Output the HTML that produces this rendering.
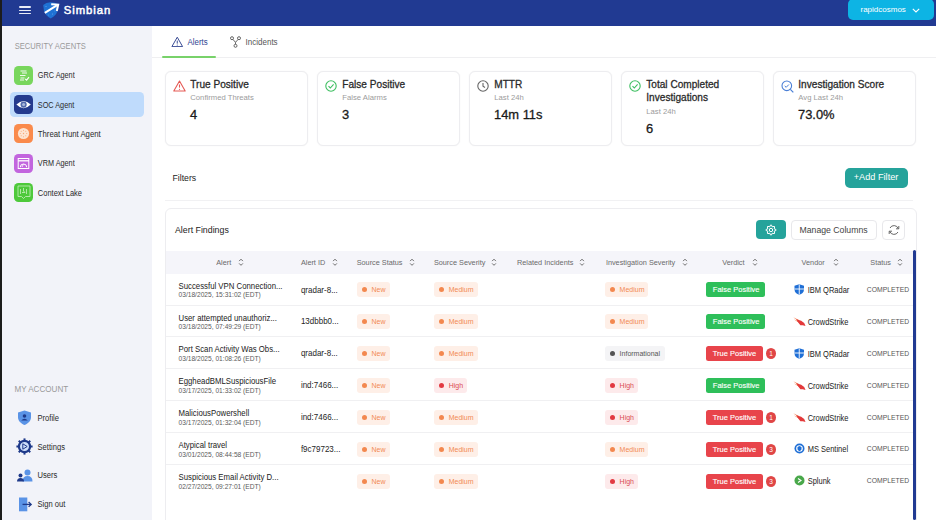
<!DOCTYPE html><html><head><meta charset="utf-8"><style>html,body{margin:0;padding:0}body{width:936px;height:520px;overflow:hidden;position:relative;background:#fff;font-family:'Liberation Sans',sans-serif;}div{box-sizing:border-box}</style></head><body>
<div style="position:absolute;left:0.00px;top:0.00px;width:936.00px;height:26.40px;background:#213a92"></div>
<div style="position:absolute;left:18.90px;top:6.20px;width:11.70px;height:1.40px;background:#e8edf8;border-radius:1px"></div>
<div style="position:absolute;left:18.90px;top:9.60px;width:11.70px;height:1.40px;background:#e8edf8;border-radius:1px"></div>
<div style="position:absolute;left:18.90px;top:12.90px;width:11.70px;height:1.40px;background:#e8edf8;border-radius:1px"></div>
<svg style="position:absolute;left:42.00px;top:1.00px" width="19" height="18" viewBox="0 0 19 18"><path d="M1.2 4 Q4 1.5 8.5 1.2 Q13 1.2 15.8 3 L15.6 9.5 Q14.5 14.5 8.8 17.4 Q3.5 15 2 10 Z" fill="#1f72d4"/><g fill="#6aa8f0"><circle cx="4" cy="5.5" r=".5"/><circle cx="10.5" cy="13" r=".5"/><circle cx="6.5" cy="14" r=".4"/><circle cx="12.8" cy="10" r=".4"/></g><path d="M2.8 11.8 L15.2 4.2" stroke="#fff" stroke-width="2.1" fill="none"/><path d="M9.2 3.2 L16.2 3.6 L14.8 10" stroke="#fff" stroke-width="2" fill="none" stroke-linejoin="miter"/></svg>
<div style="position:absolute;left:63.80px;top:4.52px;font-size:11.3px;line-height:11.3px;color:#fff;font-weight:400;white-space:nowrap;letter-spacing:0.95px;-webkit-text-stroke:0.5px #fff">Simbian</div>
<div style="position:absolute;left:847.80px;top:-1.00px;width:86.50px;height:20.80px;background:#0db4e4;border-radius:5px"></div>
<div style="position:absolute;left:860.50px;top:5.66px;font-size:8px;line-height:8px;color:#fff;font-weight:400;white-space:nowrap;">rapidcosmos</div>
<svg style="position:absolute;left:912.00px;top:8.00px" width="8" height="5" viewBox="0 0 8 5"><path d="M0.8 0.8 L4 4 L7.2 0.8" stroke="#fff" stroke-width="1.1" fill="none"/></svg>
<div style="position:absolute;left:0.00px;top:0.00px;width:2.30px;height:520.00px;background:#1c1c1c"></div>
<div style="position:absolute;left:2.30px;top:26.40px;width:149.70px;height:494.00px;background:#f2f3f9"></div>
<div style="position:absolute;left:14.70px;top:42.69px;font-size:7.6px;line-height:7.6px;color:#9a9a9a;font-weight:400;white-space:nowrap;transform:scaleY(1.15);transform-origin:0 80%">SECURITY AGENTS</div>
<div style="position:absolute;left:10.00px;top:92.00px;width:133.50px;height:24.60px;background:#bfdbfc;border-radius:4.5px"></div>
<div style="position:absolute;left:14.10px;top:65.50px;width:19.20px;height:19.20px;background:#79d65d;border-radius:4.5px"></div>
<div style="position:absolute;left:37.80px;top:72.34px;font-size:7.3px;line-height:7.3px;color:#2a2a2a;font-weight:400;white-space:nowrap;transform:scaleY(1.12);transform-origin:0 80%">GRC Agent</div>
<div style="position:absolute;left:14.10px;top:95.00px;width:19.20px;height:19.20px;background:#243a8e;border-radius:4.5px"></div>
<div style="position:absolute;left:37.80px;top:101.84px;font-size:7.3px;line-height:7.3px;color:#2a2a2a;font-weight:400;white-space:nowrap;transform:scaleY(1.12);transform-origin:0 80%">SOC Agent</div>
<div style="position:absolute;left:14.10px;top:124.20px;width:19.20px;height:19.20px;background:#fa8a4c;border-radius:4.5px"></div>
<div style="position:absolute;left:37.80px;top:130.66px;font-size:7.75px;line-height:7.75px;color:#2a2a2a;font-weight:400;white-space:nowrap;transform:scaleY(1.12);transform-origin:0 80%">Threat Hunt Agent</div>
<div style="position:absolute;left:14.10px;top:153.50px;width:19.20px;height:19.20px;background:#c265de;border-radius:4.5px"></div>
<div style="position:absolute;left:37.80px;top:160.34px;font-size:7.3px;line-height:7.3px;color:#2a2a2a;font-weight:400;white-space:nowrap;transform:scaleY(1.12);transform-origin:0 80%">VRM Agent</div>
<div style="position:absolute;left:14.10px;top:183.30px;width:19.20px;height:19.20px;background:#4ec93b;border-radius:4.5px"></div>
<div style="position:absolute;left:37.80px;top:189.97px;font-size:7.5px;line-height:7.5px;color:#2a2a2a;font-weight:400;white-space:nowrap;transform:scaleY(1.12);transform-origin:0 80%">Context Lake</div>
<svg style="position:absolute;left:14.20px;top:65.50px" width="19" height="19" viewBox="0 0 19 19"><path d="M6.5 5 H12.5 M8 7 H13 M6 9.5 H11.5 M6.5 12 H10.5 M6 14 H10" stroke="#fff" stroke-width="1.2" opacity=".9"/><path d="M11.2 12.8 L12.6 14.2 L15 11.2" stroke="#fff" stroke-width="1.1" fill="none"/></svg>
<svg style="position:absolute;left:14.20px;top:95.00px" width="19" height="19" viewBox="0 0 19 19"><path d="M2.4 9.6 Q9.6 2.2 16.8 9.6 Q9.6 17 2.4 9.6Z" fill="#fff"/><circle cx="9.6" cy="9.6" r="3.1" fill="#5268ab"/><circle cx="9.6" cy="9.6" r="1.5" fill="#a9b8dc"/></svg>
<svg style="position:absolute;left:14.20px;top:124.20px" width="19" height="19" viewBox="0 0 19 19"><circle cx="9.5" cy="9.5" r="5.6" fill="#fde4d2"/><g fill="#f9a775"><circle cx="12.70" cy="9.50" r=".55"/><circle cx="11.76" cy="11.76" r=".55"/><circle cx="9.50" cy="12.70" r=".55"/><circle cx="7.24" cy="11.76" r=".55"/><circle cx="6.30" cy="9.50" r=".55"/><circle cx="7.24" cy="7.24" r=".55"/><circle cx="9.50" cy="6.30" r=".55"/><circle cx="11.76" cy="7.24" r=".55"/><circle cx="9.5" cy="9.5" r=".7"/></g></svg>
<svg style="position:absolute;left:14.20px;top:153.50px" width="19" height="19" viewBox="0 0 19 19"><rect x="4.2" y="4.5" width="10.6" height="10" fill="none" stroke="#fff" stroke-width="1"/><path d="M4.2 6.8 H14.8" stroke="#fff" stroke-width="1.3"/><path d="M6.3 13.2 A3.2 3.2 0 0 1 12.7 13.2" stroke="#fff" stroke-width="1" fill="none"/><path d="M9.5 10 L8 13" stroke="#fff" stroke-width=".8"/></svg>
<svg style="position:absolute;left:14.20px;top:183.30px" width="19" height="19" viewBox="0 0 19 19"><path d="M4 3 H16 V13.5 H11.5 L9.5 15.5 L7.5 13.5 H4Z" fill="none" stroke="#c9f0c0" stroke-width=".8"/><path d="M6.5 6 V11 M9.5 5 V8 L11 9.5 M12.5 6 V11 M8 9.5 H11" stroke="#c9f0c0" stroke-width=".8" fill="none"/></svg>
<div style="position:absolute;left:14.40px;top:385.77px;font-size:8.1px;line-height:8.1px;color:#9a9a9a;font-weight:400;white-space:nowrap;transform:scaleY(1.1);transform-origin:0 80%">MY ACCOUNT</div>
<div style="position:absolute;left:37.50px;top:414.69px;font-size:7.6px;line-height:7.6px;color:#2a2a2a;font-weight:400;white-space:nowrap;transform:scaleY(1.12);transform-origin:0 80%">Profile</div>
<div style="position:absolute;left:37.50px;top:443.59px;font-size:7.6px;line-height:7.6px;color:#2a2a2a;font-weight:400;white-space:nowrap;transform:scaleY(1.12);transform-origin:0 80%">Settings</div>
<div style="position:absolute;left:37.50px;top:471.89px;font-size:7.6px;line-height:7.6px;color:#2a2a2a;font-weight:400;white-space:nowrap;transform:scaleY(1.12);transform-origin:0 80%">Users</div>
<div style="position:absolute;left:37.50px;top:500.69px;font-size:7.6px;line-height:7.6px;color:#2a2a2a;font-weight:400;white-space:nowrap;transform:scaleY(1.12);transform-origin:0 80%">Sign out</div>
<svg style="position:absolute;left:16.50px;top:410.00px" width="15" height="15" viewBox="0 0 15 15"><path d="M1 2.5 L7.5 0.5 L14 2.5 L14 7 C14 11 11 13.5 7.5 15 C4 13.5 1 11 1 7Z" fill="#5a93e6"/><circle cx="7.5" cy="6" r="1.8" fill="#1f3a8a"/><path d="M4.2 10.5 Q7.5 6.8 10.8 10.5Z" fill="#1f3a8a"/></svg>
<svg style="position:absolute;left:15.50px;top:438.00px" width="17" height="17" viewBox="0 0 17 17"><circle cx="8.5" cy="8.5" r="5.6" fill="#cfe0fa" stroke="#1f3a8a" stroke-width="2.2"/><g stroke="#1f3a8a" stroke-width="2"><line x1="8.5" y1="0.4" x2="8.5" y2="3" transform="rotate(0 8.5 8.5)"/><line x1="8.5" y1="0.4" x2="8.5" y2="3" transform="rotate(45 8.5 8.5)"/><line x1="8.5" y1="0.4" x2="8.5" y2="3" transform="rotate(90 8.5 8.5)"/><line x1="8.5" y1="0.4" x2="8.5" y2="3" transform="rotate(135 8.5 8.5)"/><line x1="8.5" y1="0.4" x2="8.5" y2="3" transform="rotate(180 8.5 8.5)"/><line x1="8.5" y1="0.4" x2="8.5" y2="3" transform="rotate(225 8.5 8.5)"/><line x1="8.5" y1="0.4" x2="8.5" y2="3" transform="rotate(270 8.5 8.5)"/><line x1="8.5" y1="0.4" x2="8.5" y2="3" transform="rotate(315 8.5 8.5)"/></g><path d="M6.8 5.8 L11.2 8.5 L6.8 11.2Z" fill="none" stroke="#1f3a8a" stroke-width="1"/></svg>
<svg style="position:absolute;left:15.50px;top:468.50px" width="17" height="13" viewBox="0 0 17 13"><circle cx="11.5" cy="3.5" r="3" fill="#5a93e6"/><path d="M6.5 12.5 Q6.5 7 11.5 7 Q16.5 7 16.5 12.5Z" fill="#5a93e6"/><circle cx="4.5" cy="6.5" r="2" fill="#1f3a8a"/><path d="M1 12.5 Q1 9 4.5 9 Q8 9 8 12.5Z" fill="#1f3a8a"/></svg>
<svg style="position:absolute;left:17.50px;top:496.50px" width="15" height="15" viewBox="0 0 15 15"><rect x="1" y="0.5" width="8.3" height="13.8" fill="#5a93e6"/><path d="M4.5 7.4 H13" stroke="#1f3a8a" stroke-width="1.3"/><path d="M10.6 5 L13.2 7.4 L10.6 9.8" stroke="#1f3a8a" stroke-width="1.3" fill="none"/></svg>
<svg style="position:absolute;left:171.40px;top:35.90px" width="12.5" height="11.5" viewBox="0 0 12.5 11.5"><path d="M6.25 1.2 L11.6 10.6 H0.9Z" fill="none" stroke="#3a4c94" stroke-width="1" stroke-linejoin="round"/><path d="M6.25 4.6 V7.6" stroke="#3a4c94" stroke-width="1"/><circle cx="6.25" cy="9" r=".55" fill="#3a4c94"/></svg>
<div style="position:absolute;left:187.50px;top:39.04px;font-size:7.9px;line-height:7.9px;color:#2f4390;font-weight:400;white-space:nowrap;transform:scaleY(1.1);transform-origin:0 80%">Alerts</div>
<svg style="position:absolute;left:230.30px;top:35.80px" width="11" height="12" viewBox="0 0 11 12"><circle cx="2" cy="2.2" r="1.5" fill="none" stroke="#555" stroke-width=".9"/><circle cx="9" cy="2.2" r="1.5" fill="none" stroke="#555" stroke-width=".9"/><circle cx="5.5" cy="9.8" r="1.5" fill="none" stroke="#555" stroke-width=".9"/><path d="M2.9 3.4 L5.5 6.3 L8.1 3.4 M5.5 6.3 V8.3" stroke="#555" stroke-width=".9" fill="none"/></svg>
<div style="position:absolute;left:245.60px;top:38.96px;font-size:8px;line-height:8px;color:#555;font-weight:400;white-space:nowrap;transform:scaleY(1.1);transform-origin:0 80%">Incidents</div>
<div style="position:absolute;left:152.00px;top:57.30px;width:784.00px;height:1.00px;background:#efeff1"></div>
<div style="position:absolute;left:162.00px;top:55.70px;width:54.30px;height:2.00px;background:#78d26a;border-radius:1px"></div>
<div style="position:absolute;left:164.50px;top:70.60px;width:143.50px;height:75.40px;border:1px solid #ededf0;border-radius:6px;background:#fff;box-shadow:0 0 1.5px rgba(0,0,0,.06)"></div>
<div style="position:absolute;left:190.30px;top:80.21px;font-size:10.1px;line-height:10.1px;color:#2a2a2a;font-weight:400;white-space:nowrap;-webkit-text-stroke:0.28px #2a2a2a">True Positive</div>
<div style="position:absolute;left:190.30px;top:93.51px;font-size:7.7px;line-height:7.7px;color:#9c9c9c;font-weight:400;white-space:nowrap;">Confirmed Threats</div>
<div style="position:absolute;left:190.00px;top:108.69px;font-size:12.9px;line-height:12.9px;color:#1a1a1a;font-weight:400;white-space:nowrap;-webkit-text-stroke:0.3px #1a1a1a">4</div>
<svg style="position:absolute;left:173.00px;top:80.00px" width="13" height="12" viewBox="0 0 13 12"><path d="M6.5 1 L12.2 11 H0.8Z" fill="none" stroke="#e55a55" stroke-width="1.1" stroke-linejoin="round"/><path d="M6.5 4.5 V7.6" stroke="#e55a55" stroke-width="1.1"/><circle cx="6.5" cy="9.3" r=".6" fill="#e55a55"/></svg>
<div style="position:absolute;left:316.50px;top:70.60px;width:143.50px;height:75.40px;border:1px solid #ededf0;border-radius:6px;background:#fff;box-shadow:0 0 1.5px rgba(0,0,0,.06)"></div>
<div style="position:absolute;left:342.30px;top:80.21px;font-size:10.1px;line-height:10.1px;color:#2a2a2a;font-weight:400;white-space:nowrap;-webkit-text-stroke:0.28px #2a2a2a">False Positive</div>
<div style="position:absolute;left:342.30px;top:93.51px;font-size:7.7px;line-height:7.7px;color:#9c9c9c;font-weight:400;white-space:nowrap;">False Alarms</div>
<div style="position:absolute;left:342.00px;top:108.69px;font-size:12.9px;line-height:12.9px;color:#1a1a1a;font-weight:400;white-space:nowrap;-webkit-text-stroke:0.3px #1a1a1a">3</div>
<svg style="position:absolute;left:325.00px;top:80.00px" width="12" height="12" viewBox="0 0 12 12"><circle cx="6" cy="6" r="5.2" fill="none" stroke="#3fbf62" stroke-width="1.1"/><path d="M3.5 6.2 L5.3 8 L8.6 4.4" stroke="#3fbf62" stroke-width="1.1" fill="none"/></svg>
<div style="position:absolute;left:468.50px;top:70.60px;width:143.50px;height:75.40px;border:1px solid #ededf0;border-radius:6px;background:#fff;box-shadow:0 0 1.5px rgba(0,0,0,.06)"></div>
<div style="position:absolute;left:494.30px;top:80.21px;font-size:10.1px;line-height:10.1px;color:#2a2a2a;font-weight:400;white-space:nowrap;-webkit-text-stroke:0.28px #2a2a2a">MTTR</div>
<div style="position:absolute;left:494.30px;top:93.51px;font-size:7.7px;line-height:7.7px;color:#9c9c9c;font-weight:400;white-space:nowrap;">Last 24h</div>
<div style="position:absolute;left:494.00px;top:108.69px;font-size:12.9px;line-height:12.9px;color:#1a1a1a;font-weight:400;white-space:nowrap;-webkit-text-stroke:0.3px #1a1a1a">14m 11s</div>
<svg style="position:absolute;left:477.00px;top:80.00px" width="12" height="12" viewBox="0 0 12 12"><circle cx="6" cy="6" r="5.2" fill="none" stroke="#666" stroke-width="1.1"/><path d="M6 3 V6.2 L8 7.5" stroke="#666" stroke-width="1.1" fill="none"/></svg>
<div style="position:absolute;left:620.50px;top:70.60px;width:143.50px;height:75.40px;border:1px solid #ededf0;border-radius:6px;background:#fff;box-shadow:0 0 1.5px rgba(0,0,0,.06)"></div>
<div style="position:absolute;left:646.30px;top:80.21px;font-size:10.1px;line-height:10.1px;color:#2a2a2a;font-weight:400;white-space:nowrap;-webkit-text-stroke:0.28px #2a2a2a">Total Completed</div>
<div style="position:absolute;left:646.30px;top:93.01px;font-size:10.1px;line-height:10.1px;color:#2a2a2a;font-weight:400;white-space:nowrap;-webkit-text-stroke:0.28px #2a2a2a">Investigations</div>
<div style="position:absolute;left:646.30px;top:107.51px;font-size:7.7px;line-height:7.7px;color:#9c9c9c;font-weight:400;white-space:nowrap;">Last 24h</div>
<div style="position:absolute;left:646.00px;top:122.89px;font-size:12.9px;line-height:12.9px;color:#1a1a1a;font-weight:400;white-space:nowrap;-webkit-text-stroke:0.3px #1a1a1a">6</div>
<svg style="position:absolute;left:629.00px;top:80.00px" width="12" height="12" viewBox="0 0 12 12"><circle cx="6" cy="6" r="5.2" fill="none" stroke="#3fbf62" stroke-width="1.1"/><path d="M3.5 6.2 L5.3 8 L8.6 4.4" stroke="#3fbf62" stroke-width="1.1" fill="none"/></svg>
<div style="position:absolute;left:772.50px;top:70.60px;width:143.50px;height:75.40px;border:1px solid #ededf0;border-radius:6px;background:#fff;box-shadow:0 0 1.5px rgba(0,0,0,.06)"></div>
<div style="position:absolute;left:798.30px;top:80.21px;font-size:10.1px;line-height:10.1px;color:#2a2a2a;font-weight:400;white-space:nowrap;-webkit-text-stroke:0.28px #2a2a2a">Investigation Score</div>
<div style="position:absolute;left:798.30px;top:93.51px;font-size:7.7px;line-height:7.7px;color:#9c9c9c;font-weight:400;white-space:nowrap;">Avg Last 24h</div>
<div style="position:absolute;left:798.00px;top:108.69px;font-size:12.9px;line-height:12.9px;color:#1a1a1a;font-weight:400;white-space:nowrap;-webkit-text-stroke:0.3px #1a1a1a">73.0%</div>
<svg style="position:absolute;left:781.00px;top:80.00px" width="13" height="13" viewBox="0 0 13 13"><circle cx="5.8" cy="5.8" r="4.8" fill="none" stroke="#4a7fd6" stroke-width="1.1"/><path d="M9.3 9.3 L12.3 12.3" stroke="#4a7fd6" stroke-width="1.2"/><path d="M3.7 5.9 L5.2 7.3 L7.9 4.5" stroke="#4a7fd6" stroke-width="1" fill="none"/></svg>
<div style="position:absolute;left:172.50px;top:173.57px;font-size:8.7px;line-height:8.7px;color:#222;font-weight:400;white-space:nowrap;">Filters</div>
<div style="position:absolute;left:844.50px;top:167.50px;width:63.80px;height:20.00px;background:#25a39b;border-radius:5px"></div>
<div style="position:absolute;left:853.70px;top:173.36px;font-size:9.2px;line-height:9.2px;color:#fff;font-weight:400;white-space:nowrap;">+Add Filter</div>
<div style="position:absolute;left:165.00px;top:199.90px;width:748.00px;height:1.00px;background:#f1f1f3"></div>
<div style="position:absolute;left:164.50px;top:208.00px;width:752.00px;height:320.00px;border:1px solid #ededf0;border-radius:6px;background:#fff"></div>
<div style="position:absolute;left:175.00px;top:225.89px;font-size:8.8px;line-height:8.8px;color:#222;font-weight:400;white-space:nowrap;">Alert Findings</div>
<div style="position:absolute;left:756.30px;top:220.00px;width:30.00px;height:19.30px;background:#25a39b;border-radius:4px"></div>
<svg style="position:absolute;left:765.30px;top:223.60px" width="12" height="12" viewBox="0 0 12 12"><path d="M9.61 5.21 L10.86 5.37 L10.86 6.63 L9.61 6.79 L9.12 7.99 L9.88 8.99 L8.99 9.88 L7.99 9.12 L6.79 9.61 L6.63 10.86 L5.37 10.86 L5.21 9.61 L4.01 9.12 L3.01 9.88 L2.12 8.99 L2.88 7.99 L2.39 6.79 L1.14 6.63 L1.14 5.37 L2.39 5.21 L2.88 4.01 L2.12 3.01 L3.01 2.12 L4.01 2.88 L5.21 2.39 L5.37 1.14 L6.63 1.14 L6.79 2.39 L7.99 2.88 L8.99 2.12 L9.88 3.01 L9.12 4.01Z" fill="none" stroke="#fff" stroke-width="1" stroke-linejoin="round"/><circle cx="6" cy="6" r="1.7" fill="none" stroke="#fff" stroke-width="1"/></svg>
<div style="position:absolute;left:791.30px;top:220.00px;width:85.50px;height:19.50px;border:1px solid #e8e8eb;border-radius:4px;background:#fff"></div>
<div style="position:absolute;left:799.50px;top:226.07px;font-size:8.7px;line-height:8.7px;color:#444;font-weight:400;white-space:nowrap;">Manage Columns</div>
<div style="position:absolute;left:881.70px;top:220.00px;width:23.80px;height:19.50px;border:1px solid #e8e8eb;border-radius:4px;background:#fff"></div>
<svg style="position:absolute;left:887.50px;top:223.50px" width="12" height="12" viewBox="0 0 12 12"><path d="M10.2 4.5 A4.5 4.5 0 0 0 2 4" stroke="#555" stroke-width="0.9" fill="none"/><path d="M1.8 7.5 A4.5 4.5 0 0 0 10 8" stroke="#555" stroke-width="0.9" fill="none"/><path d="M10.8 2 V4.8 H8" stroke="#555" stroke-width="0.9" fill="none"/><path d="M1.2 10 V7.2 H4" stroke="#555" stroke-width="0.9" fill="none"/></svg>
<div style="position:absolute;left:165.50px;top:250.60px;width:748.00px;height:23.20px;background:#f5f5fa"></div>
<div style="position:absolute;left:216.20px;top:259.14px;font-size:7.3px;line-height:7.3px;color:#6a6a6a;font-weight:400;white-space:nowrap;transform:scaleY(1.1);transform-origin:0 80%">Alert</div>
<svg style="position:absolute;left:238.30px;top:258.00px" width="6" height="8.5" viewBox="0 0 6 8.5"><path d="M1.1 3.1 L3 1.2 L4.9 3.1 M1.1 5.4 L3 7.3 L4.9 5.4" stroke="#666" stroke-width=".95" fill="none"/></svg>
<div style="position:absolute;left:300.90px;top:259.14px;font-size:7.3px;line-height:7.3px;color:#6a6a6a;font-weight:400;white-space:nowrap;transform:scaleY(1.1);transform-origin:0 80%">Alert ID</div>
<svg style="position:absolute;left:332.30px;top:258.00px" width="6" height="8.5" viewBox="0 0 6 8.5"><path d="M1.1 3.1 L3 1.2 L4.9 3.1 M1.1 5.4 L3 7.3 L4.9 5.4" stroke="#666" stroke-width=".95" fill="none"/></svg>
<div style="position:absolute;left:356.70px;top:259.14px;font-size:7.3px;line-height:7.3px;color:#6a6a6a;font-weight:400;white-space:nowrap;transform:scaleY(1.1);transform-origin:0 80%">Source Status</div>
<svg style="position:absolute;left:408.70px;top:258.00px" width="6" height="8.5" viewBox="0 0 6 8.5"><path d="M1.1 3.1 L3 1.2 L4.9 3.1 M1.1 5.4 L3 7.3 L4.9 5.4" stroke="#666" stroke-width=".95" fill="none"/></svg>
<div style="position:absolute;left:433.90px;top:259.14px;font-size:7.3px;line-height:7.3px;color:#6a6a6a;font-weight:400;white-space:nowrap;transform:scaleY(1.1);transform-origin:0 80%">Source Severity</div>
<svg style="position:absolute;left:491.30px;top:258.00px" width="6" height="8.5" viewBox="0 0 6 8.5"><path d="M1.1 3.1 L3 1.2 L4.9 3.1 M1.1 5.4 L3 7.3 L4.9 5.4" stroke="#666" stroke-width=".95" fill="none"/></svg>
<div style="position:absolute;left:517.00px;top:259.14px;font-size:7.3px;line-height:7.3px;color:#6a6a6a;font-weight:400;white-space:nowrap;transform:scaleY(1.1);transform-origin:0 80%">Related Incidents</div>
<svg style="position:absolute;left:579.30px;top:258.00px" width="6" height="8.5" viewBox="0 0 6 8.5"><path d="M1.1 3.1 L3 1.2 L4.9 3.1 M1.1 5.4 L3 7.3 L4.9 5.4" stroke="#666" stroke-width=".95" fill="none"/></svg>
<div style="position:absolute;left:605.90px;top:259.14px;font-size:7.3px;line-height:7.3px;color:#6a6a6a;font-weight:400;white-space:nowrap;transform:scaleY(1.1);transform-origin:0 80%">Investigation Severity</div>
<svg style="position:absolute;left:681.70px;top:258.00px" width="6" height="8.5" viewBox="0 0 6 8.5"><path d="M1.1 3.1 L3 1.2 L4.9 3.1 M1.1 5.4 L3 7.3 L4.9 5.4" stroke="#666" stroke-width=".95" fill="none"/></svg>
<div style="position:absolute;left:722.20px;top:259.14px;font-size:7.3px;line-height:7.3px;color:#6a6a6a;font-weight:400;white-space:nowrap;transform:scaleY(1.1);transform-origin:0 80%">Verdict</div>
<svg style="position:absolute;left:752.30px;top:258.00px" width="6" height="8.5" viewBox="0 0 6 8.5"><path d="M1.1 3.1 L3 1.2 L4.9 3.1 M1.1 5.4 L3 7.3 L4.9 5.4" stroke="#666" stroke-width=".95" fill="none"/></svg>
<div style="position:absolute;left:801.60px;top:259.14px;font-size:7.3px;line-height:7.3px;color:#6a6a6a;font-weight:400;white-space:nowrap;transform:scaleY(1.1);transform-origin:0 80%">Vendor</div>
<svg style="position:absolute;left:832.60px;top:258.00px" width="6" height="8.5" viewBox="0 0 6 8.5"><path d="M1.1 3.1 L3 1.2 L4.9 3.1 M1.1 5.4 L3 7.3 L4.9 5.4" stroke="#666" stroke-width=".95" fill="none"/></svg>
<div style="position:absolute;left:870.30px;top:259.14px;font-size:7.3px;line-height:7.3px;color:#6a6a6a;font-weight:400;white-space:nowrap;transform:scaleY(1.1);transform-origin:0 80%">Status</div>
<svg style="position:absolute;left:896.80px;top:258.00px" width="6" height="8.5" viewBox="0 0 6 8.5"><path d="M1.1 3.1 L3 1.2 L4.9 3.1 M1.1 5.4 L3 7.3 L4.9 5.4" stroke="#666" stroke-width=".95" fill="none"/></svg>
<div style="position:absolute;left:165.50px;top:304.50px;width:747.00px;height:1.00px;background:#f0f0f2"></div>
<div style="position:absolute;left:178.50px;top:282.62px;font-size:7.8px;line-height:7.8px;color:#222;font-weight:400;white-space:nowrap;transform:scaleY(1.1);transform-origin:0 80%">Successful VPN Connection...</div>
<div style="position:absolute;left:178.50px;top:292.28px;font-size:6.65px;line-height:6.65px;color:#5a5a5a;font-weight:400;white-space:nowrap;">03/18/2025, 15:31:02 (EDT)</div>
<div style="position:absolute;left:300.90px;top:286.56px;font-size:8px;line-height:8px;color:#1e1e1e;font-weight:400;white-space:nowrap;transform:scaleY(1.12);transform-origin:0 80%">qradar-8...</div>
<div style="position:absolute;left:357.20px;top:282.10px;width:32.50px;height:15.30px;background:#feefe7;border-radius:3px"></div>
<div style="position:absolute;left:361.60px;top:287.10px;width:5.3px;height:5.3px;border-radius:50%;background:#f3884f"></div>
<div style="position:absolute;left:371.50px;top:286.29px;font-size:7px;line-height:7px;color:#f28b55;font-weight:400;white-space:nowrap;">New</div>
<div style="position:absolute;left:434.40px;top:282.10px;width:43.20px;height:15.30px;background:#feefe7;border-radius:3px"></div>
<div style="position:absolute;left:438.80px;top:287.10px;width:5.3px;height:5.3px;border-radius:50%;background:#f3884f"></div>
<div style="position:absolute;left:448.70px;top:286.29px;font-size:7px;line-height:7px;color:#f28b55;font-weight:400;white-space:nowrap;">Medium</div>
<div style="position:absolute;left:605.30px;top:282.10px;width:43.20px;height:15.30px;background:#feefe7;border-radius:3px"></div>
<div style="position:absolute;left:609.70px;top:287.10px;width:5.3px;height:5.3px;border-radius:50%;background:#f3884f"></div>
<div style="position:absolute;left:619.60px;top:286.29px;font-size:7px;line-height:7px;color:#f28b55;font-weight:400;white-space:nowrap;">Medium</div>
<div style="position:absolute;left:706.20px;top:282.40px;width:58.80px;height:14.80px;background:#2ebf5a;border-radius:2.5px"></div>
<div style="position:absolute;left:712.80px;top:286.17px;font-size:7.5px;line-height:7.5px;color:#fff;font-weight:400;white-space:nowrap;-webkit-text-stroke:0.12px #fff;transform:scaleY(1.08);transform-origin:0 80%">False Positive</div>
<svg style="position:absolute;left:794.00px;top:283.90px" width="10.5" height="11" viewBox="0 0 10.5 11"><path d="M0.5 1.8 L5.25 0.2 L10 1.8 L10 5.5 C10 8.3 7.8 10 5.25 10.8 C2.7 10 0.5 8.3 0.5 5.5Z" fill="#1f6fd6"/><path d="M5.25 0.5 V10.5 M0.5 5 H10" stroke="#fff" stroke-width=".9"/></svg>
<div style="position:absolute;left:807.70px;top:286.97px;font-size:7.5px;line-height:7.5px;color:#222;font-weight:400;white-space:nowrap;transform:scaleY(1.1);transform-origin:0 80%">IBM QRadar</div>
<div style="position:absolute;left:866.80px;top:286.95px;font-size:6.8px;line-height:6.8px;color:#555;font-weight:400;white-space:nowrap;transform:scaleY(1.1);transform-origin:0 80%">COMPLETED</div>
<div style="position:absolute;left:165.50px;top:336.40px;width:747.00px;height:1.00px;background:#f0f0f2"></div>
<div style="position:absolute;left:178.50px;top:314.52px;font-size:7.8px;line-height:7.8px;color:#222;font-weight:400;white-space:nowrap;transform:scaleY(1.1);transform-origin:0 80%">User attempted unauthoriz...</div>
<div style="position:absolute;left:178.50px;top:324.18px;font-size:6.65px;line-height:6.65px;color:#5a5a5a;font-weight:400;white-space:nowrap;">03/18/2025, 07:49:29 (EDT)</div>
<div style="position:absolute;left:300.90px;top:318.46px;font-size:8px;line-height:8px;color:#1e1e1e;font-weight:400;white-space:nowrap;transform:scaleY(1.12);transform-origin:0 80%">13dbbb0...</div>
<div style="position:absolute;left:357.20px;top:314.00px;width:32.50px;height:15.30px;background:#feefe7;border-radius:3px"></div>
<div style="position:absolute;left:361.60px;top:319.00px;width:5.3px;height:5.3px;border-radius:50%;background:#f3884f"></div>
<div style="position:absolute;left:371.50px;top:318.19px;font-size:7px;line-height:7px;color:#f28b55;font-weight:400;white-space:nowrap;">New</div>
<div style="position:absolute;left:434.40px;top:314.00px;width:43.20px;height:15.30px;background:#feefe7;border-radius:3px"></div>
<div style="position:absolute;left:438.80px;top:319.00px;width:5.3px;height:5.3px;border-radius:50%;background:#f3884f"></div>
<div style="position:absolute;left:448.70px;top:318.19px;font-size:7px;line-height:7px;color:#f28b55;font-weight:400;white-space:nowrap;">Medium</div>
<div style="position:absolute;left:605.30px;top:314.00px;width:43.20px;height:15.30px;background:#feefe7;border-radius:3px"></div>
<div style="position:absolute;left:609.70px;top:319.00px;width:5.3px;height:5.3px;border-radius:50%;background:#f3884f"></div>
<div style="position:absolute;left:619.60px;top:318.19px;font-size:7px;line-height:7px;color:#f28b55;font-weight:400;white-space:nowrap;">Medium</div>
<div style="position:absolute;left:706.20px;top:314.30px;width:58.80px;height:14.80px;background:#2ebf5a;border-radius:2.5px"></div>
<div style="position:absolute;left:712.80px;top:318.07px;font-size:7.5px;line-height:7.5px;color:#fff;font-weight:400;white-space:nowrap;-webkit-text-stroke:0.12px #fff;transform:scaleY(1.08);transform-origin:0 80%">False Positive</div>
<svg style="position:absolute;left:793.20px;top:317.20px" width="12.8" height="9.5" viewBox="0 0 12.8 9.5"><path d="M0.3 0.3 L6.5 3.2 L5.2 3.9Z M1 2.6 L6.8 4.8 L5.6 5.4Z" fill="#f2784a"/><path d="M3.2 2.2 L8.2 3.8 L11.2 6 L12.5 9 L9.8 8.2 L7.4 8.2 L5.4 5.8 Z" fill="#e3393a"/></svg>
<div style="position:absolute;left:807.70px;top:318.87px;font-size:7.5px;line-height:7.5px;color:#222;font-weight:400;white-space:nowrap;transform:scaleY(1.1);transform-origin:0 80%">CrowdStrike</div>
<div style="position:absolute;left:866.80px;top:318.85px;font-size:6.8px;line-height:6.8px;color:#555;font-weight:400;white-space:nowrap;transform:scaleY(1.1);transform-origin:0 80%">COMPLETED</div>
<div style="position:absolute;left:165.50px;top:368.30px;width:747.00px;height:1.00px;background:#f0f0f2"></div>
<div style="position:absolute;left:178.50px;top:346.42px;font-size:7.8px;line-height:7.8px;color:#222;font-weight:400;white-space:nowrap;transform:scaleY(1.1);transform-origin:0 80%">Port Scan Activity Was Obs...</div>
<div style="position:absolute;left:178.50px;top:356.08px;font-size:6.65px;line-height:6.65px;color:#5a5a5a;font-weight:400;white-space:nowrap;">03/18/2025, 01:08:26 (EDT)</div>
<div style="position:absolute;left:300.90px;top:350.36px;font-size:8px;line-height:8px;color:#1e1e1e;font-weight:400;white-space:nowrap;transform:scaleY(1.12);transform-origin:0 80%">qradar-8...</div>
<div style="position:absolute;left:357.20px;top:345.90px;width:32.50px;height:15.30px;background:#feefe7;border-radius:3px"></div>
<div style="position:absolute;left:361.60px;top:350.90px;width:5.3px;height:5.3px;border-radius:50%;background:#f3884f"></div>
<div style="position:absolute;left:371.50px;top:350.09px;font-size:7px;line-height:7px;color:#f28b55;font-weight:400;white-space:nowrap;">New</div>
<div style="position:absolute;left:434.40px;top:345.90px;width:43.20px;height:15.30px;background:#feefe7;border-radius:3px"></div>
<div style="position:absolute;left:438.80px;top:350.90px;width:5.3px;height:5.3px;border-radius:50%;background:#f3884f"></div>
<div style="position:absolute;left:448.70px;top:350.09px;font-size:7px;line-height:7px;color:#f28b55;font-weight:400;white-space:nowrap;">Medium</div>
<div style="position:absolute;left:605.30px;top:345.90px;width:59.80px;height:15.30px;background:#f4f4f6;border-radius:3px"></div>
<div style="position:absolute;left:609.70px;top:350.90px;width:5.3px;height:5.3px;border-radius:50%;background:#555"></div>
<div style="position:absolute;left:619.60px;top:350.09px;font-size:7px;line-height:7px;color:#555;font-weight:400;white-space:nowrap;">Informational</div>
<div style="position:absolute;left:706.20px;top:346.20px;width:57.20px;height:14.80px;background:#e8444b;border-radius:2.5px"></div>
<div style="position:absolute;left:712.80px;top:349.97px;font-size:7.5px;line-height:7.5px;color:#fff;font-weight:400;white-space:nowrap;-webkit-text-stroke:0.12px #fff;transform:scaleY(1.08);transform-origin:0 80%">True Positive</div>
<div style="position:absolute;left:765.8px;top:348.20px;width:10.6px;height:11px;border-radius:50%;background:#e04646;color:#fff;font-size:6.5px;line-height:11px;text-align:center;font-weight:400">1</div>
<svg style="position:absolute;left:794.00px;top:347.70px" width="10.5" height="11" viewBox="0 0 10.5 11"><path d="M0.5 1.8 L5.25 0.2 L10 1.8 L10 5.5 C10 8.3 7.8 10 5.25 10.8 C2.7 10 0.5 8.3 0.5 5.5Z" fill="#1f6fd6"/><path d="M5.25 0.5 V10.5 M0.5 5 H10" stroke="#fff" stroke-width=".9"/></svg>
<div style="position:absolute;left:807.70px;top:350.77px;font-size:7.5px;line-height:7.5px;color:#222;font-weight:400;white-space:nowrap;transform:scaleY(1.1);transform-origin:0 80%">IBM QRadar</div>
<div style="position:absolute;left:866.80px;top:350.75px;font-size:6.8px;line-height:6.8px;color:#555;font-weight:400;white-space:nowrap;transform:scaleY(1.1);transform-origin:0 80%">COMPLETED</div>
<div style="position:absolute;left:165.50px;top:400.20px;width:747.00px;height:1.00px;background:#f0f0f2"></div>
<div style="position:absolute;left:178.50px;top:378.32px;font-size:7.8px;line-height:7.8px;color:#222;font-weight:400;white-space:nowrap;transform:scaleY(1.1);transform-origin:0 80%">EggheadBMLSuspiciousFile</div>
<div style="position:absolute;left:178.50px;top:387.98px;font-size:6.65px;line-height:6.65px;color:#5a5a5a;font-weight:400;white-space:nowrap;">03/17/2025, 01:33:02 (EDT)</div>
<div style="position:absolute;left:300.90px;top:382.26px;font-size:8px;line-height:8px;color:#1e1e1e;font-weight:400;white-space:nowrap;transform:scaleY(1.12);transform-origin:0 80%">ind:7466...</div>
<div style="position:absolute;left:357.20px;top:377.80px;width:32.50px;height:15.30px;background:#feefe7;border-radius:3px"></div>
<div style="position:absolute;left:361.60px;top:382.80px;width:5.3px;height:5.3px;border-radius:50%;background:#f3884f"></div>
<div style="position:absolute;left:371.50px;top:381.99px;font-size:7px;line-height:7px;color:#f28b55;font-weight:400;white-space:nowrap;">New</div>
<div style="position:absolute;left:434.40px;top:377.80px;width:32.30px;height:15.30px;background:#fdeaeb;border-radius:3px"></div>
<div style="position:absolute;left:438.80px;top:382.80px;width:5.3px;height:5.3px;border-radius:50%;background:#e23a42"></div>
<div style="position:absolute;left:448.70px;top:381.99px;font-size:7px;line-height:7px;color:#da4a52;font-weight:400;white-space:nowrap;">High</div>
<div style="position:absolute;left:605.30px;top:377.80px;width:32.30px;height:15.30px;background:#fdeaeb;border-radius:3px"></div>
<div style="position:absolute;left:609.70px;top:382.80px;width:5.3px;height:5.3px;border-radius:50%;background:#e23a42"></div>
<div style="position:absolute;left:619.60px;top:381.99px;font-size:7px;line-height:7px;color:#da4a52;font-weight:400;white-space:nowrap;">High</div>
<div style="position:absolute;left:706.20px;top:378.10px;width:58.80px;height:14.80px;background:#2ebf5a;border-radius:2.5px"></div>
<div style="position:absolute;left:712.80px;top:381.87px;font-size:7.5px;line-height:7.5px;color:#fff;font-weight:400;white-space:nowrap;-webkit-text-stroke:0.12px #fff;transform:scaleY(1.08);transform-origin:0 80%">False Positive</div>
<svg style="position:absolute;left:793.20px;top:381.00px" width="12.8" height="9.5" viewBox="0 0 12.8 9.5"><path d="M0.3 0.3 L6.5 3.2 L5.2 3.9Z M1 2.6 L6.8 4.8 L5.6 5.4Z" fill="#f2784a"/><path d="M3.2 2.2 L8.2 3.8 L11.2 6 L12.5 9 L9.8 8.2 L7.4 8.2 L5.4 5.8 Z" fill="#e3393a"/></svg>
<div style="position:absolute;left:807.70px;top:382.67px;font-size:7.5px;line-height:7.5px;color:#222;font-weight:400;white-space:nowrap;transform:scaleY(1.1);transform-origin:0 80%">CrowdStrike</div>
<div style="position:absolute;left:866.80px;top:382.65px;font-size:6.8px;line-height:6.8px;color:#555;font-weight:400;white-space:nowrap;transform:scaleY(1.1);transform-origin:0 80%">COMPLETED</div>
<div style="position:absolute;left:165.50px;top:432.10px;width:747.00px;height:1.00px;background:#f0f0f2"></div>
<div style="position:absolute;left:178.50px;top:410.22px;font-size:7.8px;line-height:7.8px;color:#222;font-weight:400;white-space:nowrap;transform:scaleY(1.1);transform-origin:0 80%">MaliciousPowershell</div>
<div style="position:absolute;left:178.50px;top:419.88px;font-size:6.65px;line-height:6.65px;color:#5a5a5a;font-weight:400;white-space:nowrap;">03/17/2025, 01:32:04 (EDT)</div>
<div style="position:absolute;left:300.90px;top:414.16px;font-size:8px;line-height:8px;color:#1e1e1e;font-weight:400;white-space:nowrap;transform:scaleY(1.12);transform-origin:0 80%">ind:7466...</div>
<div style="position:absolute;left:357.20px;top:409.70px;width:32.50px;height:15.30px;background:#feefe7;border-radius:3px"></div>
<div style="position:absolute;left:361.60px;top:414.70px;width:5.3px;height:5.3px;border-radius:50%;background:#f3884f"></div>
<div style="position:absolute;left:371.50px;top:413.89px;font-size:7px;line-height:7px;color:#f28b55;font-weight:400;white-space:nowrap;">New</div>
<div style="position:absolute;left:434.40px;top:409.70px;width:43.20px;height:15.30px;background:#feefe7;border-radius:3px"></div>
<div style="position:absolute;left:438.80px;top:414.70px;width:5.3px;height:5.3px;border-radius:50%;background:#f3884f"></div>
<div style="position:absolute;left:448.70px;top:413.89px;font-size:7px;line-height:7px;color:#f28b55;font-weight:400;white-space:nowrap;">Medium</div>
<div style="position:absolute;left:605.30px;top:409.70px;width:32.30px;height:15.30px;background:#fdeaeb;border-radius:3px"></div>
<div style="position:absolute;left:609.70px;top:414.70px;width:5.3px;height:5.3px;border-radius:50%;background:#e23a42"></div>
<div style="position:absolute;left:619.60px;top:413.89px;font-size:7px;line-height:7px;color:#da4a52;font-weight:400;white-space:nowrap;">High</div>
<div style="position:absolute;left:706.20px;top:410.00px;width:57.20px;height:14.80px;background:#e8444b;border-radius:2.5px"></div>
<div style="position:absolute;left:712.80px;top:413.77px;font-size:7.5px;line-height:7.5px;color:#fff;font-weight:400;white-space:nowrap;-webkit-text-stroke:0.12px #fff;transform:scaleY(1.08);transform-origin:0 80%">True Positive</div>
<div style="position:absolute;left:765.8px;top:412.00px;width:10.6px;height:11px;border-radius:50%;background:#e04646;color:#fff;font-size:6.5px;line-height:11px;text-align:center;font-weight:400">1</div>
<svg style="position:absolute;left:793.20px;top:412.90px" width="12.8" height="9.5" viewBox="0 0 12.8 9.5"><path d="M0.3 0.3 L6.5 3.2 L5.2 3.9Z M1 2.6 L6.8 4.8 L5.6 5.4Z" fill="#f2784a"/><path d="M3.2 2.2 L8.2 3.8 L11.2 6 L12.5 9 L9.8 8.2 L7.4 8.2 L5.4 5.8 Z" fill="#e3393a"/></svg>
<div style="position:absolute;left:807.70px;top:414.57px;font-size:7.5px;line-height:7.5px;color:#222;font-weight:400;white-space:nowrap;transform:scaleY(1.1);transform-origin:0 80%">CrowdStrike</div>
<div style="position:absolute;left:866.80px;top:414.55px;font-size:6.8px;line-height:6.8px;color:#555;font-weight:400;white-space:nowrap;transform:scaleY(1.1);transform-origin:0 80%">COMPLETED</div>
<div style="position:absolute;left:165.50px;top:464.00px;width:747.00px;height:1.00px;background:#f0f0f2"></div>
<div style="position:absolute;left:178.50px;top:442.12px;font-size:7.8px;line-height:7.8px;color:#222;font-weight:400;white-space:nowrap;transform:scaleY(1.1);transform-origin:0 80%">Atypical travel</div>
<div style="position:absolute;left:178.50px;top:451.78px;font-size:6.65px;line-height:6.65px;color:#5a5a5a;font-weight:400;white-space:nowrap;">03/01/2025, 08:44:58 (EDT)</div>
<div style="position:absolute;left:300.90px;top:446.06px;font-size:8px;line-height:8px;color:#1e1e1e;font-weight:400;white-space:nowrap;transform:scaleY(1.12);transform-origin:0 80%">f9c79723...</div>
<div style="position:absolute;left:357.20px;top:441.60px;width:32.50px;height:15.30px;background:#feefe7;border-radius:3px"></div>
<div style="position:absolute;left:361.60px;top:446.60px;width:5.3px;height:5.3px;border-radius:50%;background:#f3884f"></div>
<div style="position:absolute;left:371.50px;top:445.79px;font-size:7px;line-height:7px;color:#f28b55;font-weight:400;white-space:nowrap;">New</div>
<div style="position:absolute;left:434.40px;top:441.60px;width:43.20px;height:15.30px;background:#feefe7;border-radius:3px"></div>
<div style="position:absolute;left:438.80px;top:446.60px;width:5.3px;height:5.3px;border-radius:50%;background:#f3884f"></div>
<div style="position:absolute;left:448.70px;top:445.79px;font-size:7px;line-height:7px;color:#f28b55;font-weight:400;white-space:nowrap;">Medium</div>
<div style="position:absolute;left:605.30px;top:441.60px;width:43.20px;height:15.30px;background:#feefe7;border-radius:3px"></div>
<div style="position:absolute;left:609.70px;top:446.60px;width:5.3px;height:5.3px;border-radius:50%;background:#f3884f"></div>
<div style="position:absolute;left:619.60px;top:445.79px;font-size:7px;line-height:7px;color:#f28b55;font-weight:400;white-space:nowrap;">Medium</div>
<div style="position:absolute;left:706.20px;top:441.90px;width:57.20px;height:14.80px;background:#e8444b;border-radius:2.5px"></div>
<div style="position:absolute;left:712.80px;top:445.67px;font-size:7.5px;line-height:7.5px;color:#fff;font-weight:400;white-space:nowrap;-webkit-text-stroke:0.12px #fff;transform:scaleY(1.08);transform-origin:0 80%">True Positive</div>
<div style="position:absolute;left:765.8px;top:443.90px;width:10.6px;height:11px;border-radius:50%;background:#e04646;color:#fff;font-size:6.5px;line-height:11px;text-align:center;font-weight:400">3</div>
<svg style="position:absolute;left:794.00px;top:443.40px" width="11" height="11" viewBox="0 0 11 11"><circle cx="5.5" cy="5.5" r="5" fill="#1f6fd6"/><circle cx="5.5" cy="5.5" r="3.3" fill="#fff"/><path d="M3.5 4 L5.5 3 L7.5 4 V6 C7.5 7 6.5 7.8 5.5 8.2 C4.5 7.8 3.5 7 3.5 6Z" fill="#1f6fd6"/></svg>
<div style="position:absolute;left:807.70px;top:446.47px;font-size:7.5px;line-height:7.5px;color:#222;font-weight:400;white-space:nowrap;transform:scaleY(1.1);transform-origin:0 80%">MS Sentinel</div>
<div style="position:absolute;left:866.80px;top:446.45px;font-size:6.8px;line-height:6.8px;color:#555;font-weight:400;white-space:nowrap;transform:scaleY(1.1);transform-origin:0 80%">COMPLETED</div>
<div style="position:absolute;left:178.50px;top:474.02px;font-size:7.8px;line-height:7.8px;color:#222;font-weight:400;white-space:nowrap;transform:scaleY(1.1);transform-origin:0 80%">Suspicious Email Activity D...</div>
<div style="position:absolute;left:178.50px;top:483.68px;font-size:6.65px;line-height:6.65px;color:#5a5a5a;font-weight:400;white-space:nowrap;">02/27/2025, 09:27:01 (EDT)</div>
<div style="position:absolute;left:357.20px;top:473.50px;width:32.50px;height:15.30px;background:#feefe7;border-radius:3px"></div>
<div style="position:absolute;left:361.60px;top:478.50px;width:5.3px;height:5.3px;border-radius:50%;background:#f3884f"></div>
<div style="position:absolute;left:371.50px;top:477.69px;font-size:7px;line-height:7px;color:#f28b55;font-weight:400;white-space:nowrap;">New</div>
<div style="position:absolute;left:434.40px;top:473.50px;width:43.20px;height:15.30px;background:#feefe7;border-radius:3px"></div>
<div style="position:absolute;left:438.80px;top:478.50px;width:5.3px;height:5.3px;border-radius:50%;background:#f3884f"></div>
<div style="position:absolute;left:448.70px;top:477.69px;font-size:7px;line-height:7px;color:#f28b55;font-weight:400;white-space:nowrap;">Medium</div>
<div style="position:absolute;left:605.30px;top:473.50px;width:32.30px;height:15.30px;background:#fdeaeb;border-radius:3px"></div>
<div style="position:absolute;left:609.70px;top:478.50px;width:5.3px;height:5.3px;border-radius:50%;background:#e23a42"></div>
<div style="position:absolute;left:619.60px;top:477.69px;font-size:7px;line-height:7px;color:#da4a52;font-weight:400;white-space:nowrap;">High</div>
<div style="position:absolute;left:706.20px;top:473.80px;width:57.20px;height:14.80px;background:#e8444b;border-radius:2.5px"></div>
<div style="position:absolute;left:712.80px;top:477.57px;font-size:7.5px;line-height:7.5px;color:#fff;font-weight:400;white-space:nowrap;-webkit-text-stroke:0.12px #fff;transform:scaleY(1.08);transform-origin:0 80%">True Positive</div>
<div style="position:absolute;left:765.8px;top:475.80px;width:10.6px;height:11px;border-radius:50%;background:#e04646;color:#fff;font-size:6.5px;line-height:11px;text-align:center;font-weight:400">3</div>
<svg style="position:absolute;left:794.00px;top:475.30px" width="11" height="11" viewBox="0 0 11 11"><circle cx="5.5" cy="5.5" r="5" fill="#49a84a"/><path d="M4 3.5 L7 5.5 L4 7.5" stroke="#fff" stroke-width="1.1" fill="none"/></svg>
<div style="position:absolute;left:807.70px;top:478.37px;font-size:7.5px;line-height:7.5px;color:#222;font-weight:400;white-space:nowrap;transform:scaleY(1.1);transform-origin:0 80%">Splunk</div>
<div style="position:absolute;left:866.80px;top:478.35px;font-size:6.8px;line-height:6.8px;color:#555;font-weight:400;white-space:nowrap;transform:scaleY(1.1);transform-origin:0 80%">COMPLETED</div>
<div style="position:absolute;left:912.50px;top:250.00px;width:3.70px;height:269.50px;background:#213a92;border-radius:2px"></div>
</body></html>
